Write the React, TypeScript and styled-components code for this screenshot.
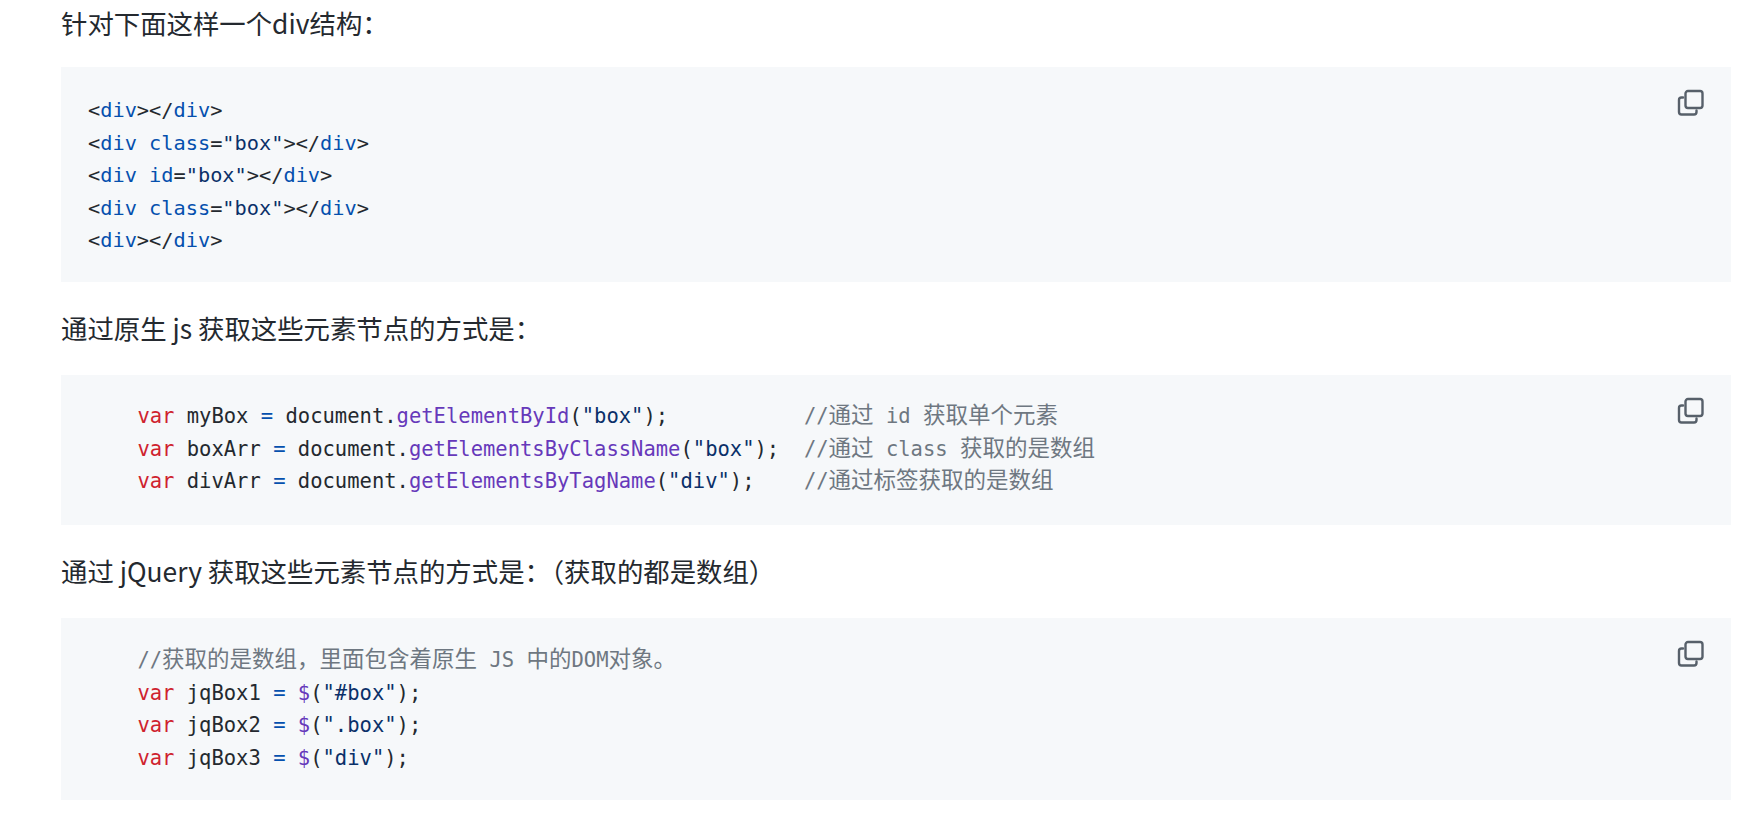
import React from "react";
import styled, { createGlobalStyle } from "styled-components";

const Global = createGlobalStyle`
  html, body { margin: 0; padding: 0; background: #fff; overflow: hidden; }
`;

const Article = styled.div`
  width: 1750px;
  height: 826px;
  box-sizing: border-box;
  padding: 0 19px 0 61px;
  font-family: "Noto Sans CJK SC", "Noto Sans", sans-serif;
  color: #24292f;
`;

const Para = styled.p<{ $h: number }>`
  margin: 0;
  height: ${(p) => p.$h}px;
  font-size: 26.4px;
  line-height: 46px;
  color: #24292f;
`;

const CodeBox = styled.div<{ $h: number; $top: number }>`
  position: relative;
  height: ${(p) => p.$h}px;
  box-sizing: border-box;
  background: #f6f8fa;
  padding: ${(p) => p.$top}px 27px 0;
  margin-bottom: 23px;
`;

const Pre = styled.pre<{ $size: number }>`
  margin: 0;
  font-family: "DejaVu Sans Mono", "Noto Sans CJK SC", monospace;
  font-size: ${(p) => p.$size}px;
  line-height: 32.6px;
  color: #24292f;
`;

const Tag = styled.span`color: #0550ae;`;
const Kw = styled.span`color: #cf222e;`;
const Fn = styled.span`color: #6639ba;`;
const Str = styled.span`color: #0a3069;`;
const Cm = styled.span`color: #6e7781;`;
const Han = styled.span`
  font-family: "Noto Sans CJK SC", sans-serif;
  font-size: 22.5px;
  line-height: 1;
`;

const CopyBtn = styled.svg`
  position: absolute;
  top: 22px;
  right: 26px;
  width: 28px;
  height: 28px;
  color: #57606a;
`;

const CopyIcon = () => (
  <CopyBtn viewBox="0 0 28 28" fill="none" stroke="currentColor" strokeWidth="2.4" strokeLinecap="round" strokeLinejoin="round">
    <rect x="8.5" y="2" width="17" height="17" rx="2.5" />
    <path d="M6 8.5H4.5A2.5 2.5 0 0 0 2 11v12a2.5 2.5 0 0 0 2.5 2.5H17a2.5 2.5 0 0 0 2.5-2.5v-1.5" />
  </CopyBtn>
);

const Empty = () => (
  <>
    &lt;<Tag>div</Tag>&gt;&lt;/<Tag>div</Tag>&gt;
  </>
);

const WithAttr = ({ name }: { name: string }) => (
  <>
    &lt;<Tag>div</Tag> <Tag>{name}</Tag>=<Str>"box"</Str>&gt;&lt;/<Tag>div</Tag>&gt;
  </>
);

export default function App() {
  return (
    <Article>
      <Global />
      <Para $h={67}>针对下面这样一个div结构：</Para>
      <CodeBox $h={215} $top={27}>
        <Pre $size={20.3}>
          <Empty />{"\n"}
          <WithAttr name="class" />{"\n"}
          <WithAttr name="id" />{"\n"}
          <WithAttr name="class" />{"\n"}
          <Empty />
        </Pre>
        <CopyIcon />
      </CodeBox>
      <Para $h={70}>通过原生 js 获取这些元素节点的方式是：</Para>
      <CodeBox $h={150} $top={25}>
        <Pre $size={20.5}>
          {"    "}<Kw>var</Kw> myBox <Tag>=</Tag> document.<Fn>getElementById</Fn>(<Str>"box"</Str>);{"           "}<Cm>//<Han>通过</Han> id <Han>获取单个元素</Han></Cm>{"\n"}
          {"    "}<Kw>var</Kw> boxArr <Tag>=</Tag> document.<Fn>getElementsByClassName</Fn>(<Str>"box"</Str>);{"  "}<Cm>//<Han>通过</Han> class <Han>获取的是数组</Han></Cm>{"\n"}
          {"    "}<Kw>var</Kw> divArr <Tag>=</Tag> document.<Fn>getElementsByTagName</Fn>(<Str>"div"</Str>);{"    "}<Cm>//<Han>通过标签获取的是数组</Han></Cm>
        </Pre>
        <CopyIcon />
      </CodeBox>
      <Para $h={70}>通过 jQuery 获取这些元素节点的方式是：（获取的都是数组）</Para>
      <CodeBox $h={182} $top={26}>
        <Pre $size={20.5}>
          {"    "}<Cm>//<Han>获取的是数组，里面包含着原生</Han> JS <Han>中的</Han>DOM<Han>对象。</Han></Cm>{"\n"}
          {"    "}<Kw>var</Kw> jqBox1 <Tag>=</Tag> <Fn>$</Fn>(<Str>"#box"</Str>);{"\n"}
          {"    "}<Kw>var</Kw> jqBox2 <Tag>=</Tag> <Fn>$</Fn>(<Str>".box"</Str>);{"\n"}
          {"    "}<Kw>var</Kw> jqBox3 <Tag>=</Tag> <Fn>$</Fn>(<Str>"div"</Str>);
        </Pre>
        <CopyIcon />
      </CodeBox>
    </Article>
  );
}
